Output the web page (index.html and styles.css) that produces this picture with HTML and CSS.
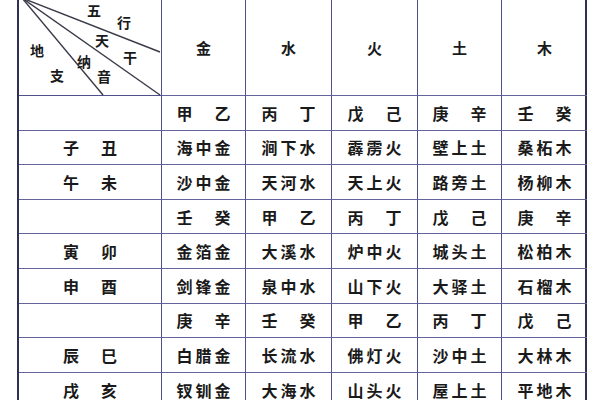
FILE: index.html
```html
<!DOCTYPE html>
<html lang="zh-CN">
<head>
<meta charset="utf-8">
<title>纳音五行表</title>
<link rel="stylesheet" href="styles.css">
</head>
<body>
<div class="table">
  <div class="cell corner">
    <svg class="diag" width="141" height="95" viewBox="0 0 141 95">
      <line x1="3" y1="-2" x2="141" y2="52" />
      <line x1="3" y1="-2" x2="141" y2="95" />
      <line x1="3" y1="-2" x2="84" y2="95" />
    </svg>
    <span class="lbl l-wu">五</span>
    <span class="lbl l-xing">行</span>
    <span class="lbl l-tian">天</span>
    <span class="lbl l-gan">干</span>
    <span class="lbl l-di">地</span>
    <span class="lbl l-na">纳</span>
    <span class="lbl l-zhi">支</span>
    <span class="lbl l-yin">音</span>
  </div>
  <div class="cell head">金</div>
  <div class="cell head">水</div>
  <div class="cell head">火</div>
  <div class="cell head">土</div>
  <div class="cell head">木</div>

  <div class="cell"></div>
  <div class="cell">甲　乙</div>
  <div class="cell">丙　丁</div>
  <div class="cell">戊　己</div>
  <div class="cell">庚　辛</div>
  <div class="cell">壬　癸</div>

  <div class="cell">子　丑</div>
  <div class="cell">海中金</div>
  <div class="cell">涧下水</div>
  <div class="cell">霹雳火</div>
  <div class="cell">壁上土</div>
  <div class="cell">桑柘木</div>

  <div class="cell">午　未</div>
  <div class="cell">沙中金</div>
  <div class="cell">天河水</div>
  <div class="cell">天上火</div>
  <div class="cell">路旁土</div>
  <div class="cell">杨柳木</div>

  <div class="cell"></div>
  <div class="cell">壬　癸</div>
  <div class="cell">甲　乙</div>
  <div class="cell">丙　丁</div>
  <div class="cell">戊　己</div>
  <div class="cell">庚　辛</div>

  <div class="cell">寅　卯</div>
  <div class="cell">金箔金</div>
  <div class="cell">大溪水</div>
  <div class="cell">炉中火</div>
  <div class="cell">城头土</div>
  <div class="cell">松柏木</div>

  <div class="cell">申　酉</div>
  <div class="cell">剑锋金</div>
  <div class="cell">泉中水</div>
  <div class="cell">山下火</div>
  <div class="cell">大驿土</div>
  <div class="cell">石榴木</div>

  <div class="cell"></div>
  <div class="cell">庚　辛</div>
  <div class="cell">壬　癸</div>
  <div class="cell">甲　乙</div>
  <div class="cell">丙　丁</div>
  <div class="cell">戊　己</div>

  <div class="cell">辰　巳</div>
  <div class="cell">白腊金</div>
  <div class="cell">长流水</div>
  <div class="cell">佛灯火</div>
  <div class="cell">沙中土</div>
  <div class="cell">大林木</div>

  <div class="cell">戌　亥</div>
  <div class="cell">钗钏金</div>
  <div class="cell">大海水</div>
  <div class="cell">山头火</div>
  <div class="cell">屋上土</div>
  <div class="cell">平地木</div>
</div>
</body>
</html>
```

FILE: styles.css
```css
html, body {
  margin: 0;
  padding: 0;
  background: #ffffff;
  width: 600px;
  height: 400px;
  overflow: hidden;
}

.table {
  margin-left: 17px;
  width: 570px;
  display: grid;
  grid-template-columns: 143px 84px 86px 86px 84px 85px;
  grid-template-rows: 96px repeat(9, 34.6px);
  border-left: 2px solid #2f2f58;
  border-right: 2px solid #2f2f58;
  box-sizing: border-box;
  font-family: "Noto Sans CJK SC", "Noto Sans", sans-serif;
  color: #1a1a1a;
}

.cell {
  box-sizing: border-box;
  border-right: 1.5px solid #50508a;
  border-bottom: 1.5px solid #64649a;
  display: flex;
  align-items: center;
  justify-content: center;
  font-size: 16px;
  font-weight: 700;
  letter-spacing: 3px;
  padding-left: 3px;
  white-space: nowrap;
}

.cell:nth-child(6n) {
  border-right: none;
}

.head {
  font-size: 15px;
}

.corner {
  position: relative;
  padding: 0;
  border-bottom: 1.5px solid #50508a;
}

.diag {
  position: absolute;
  left: 0;
  top: 0;
  overflow: visible;
}

.diag line {
  stroke: #3a3a48;
  stroke-width: 1.4;
}

.lbl {
  position: absolute;
  font-size: 14px;
  font-weight: 700;
  letter-spacing: 0;
  line-height: 14px;
  width: 14px;
  height: 14px;
}

.l-wu { left: 68px; top: 3px; }
.l-xing { left: 98px; top: 15px; }
.l-tian { left: 76px; top: 33px; }
.l-gan { left: 104px; top: 50px; }
.l-di { left: 11px; top: 43px; }
.l-na { left: 58px; top: 54px; }
.l-zhi { left: 31px; top: 68px; }
.l-yin { left: 78px; top: 69px; }
```
